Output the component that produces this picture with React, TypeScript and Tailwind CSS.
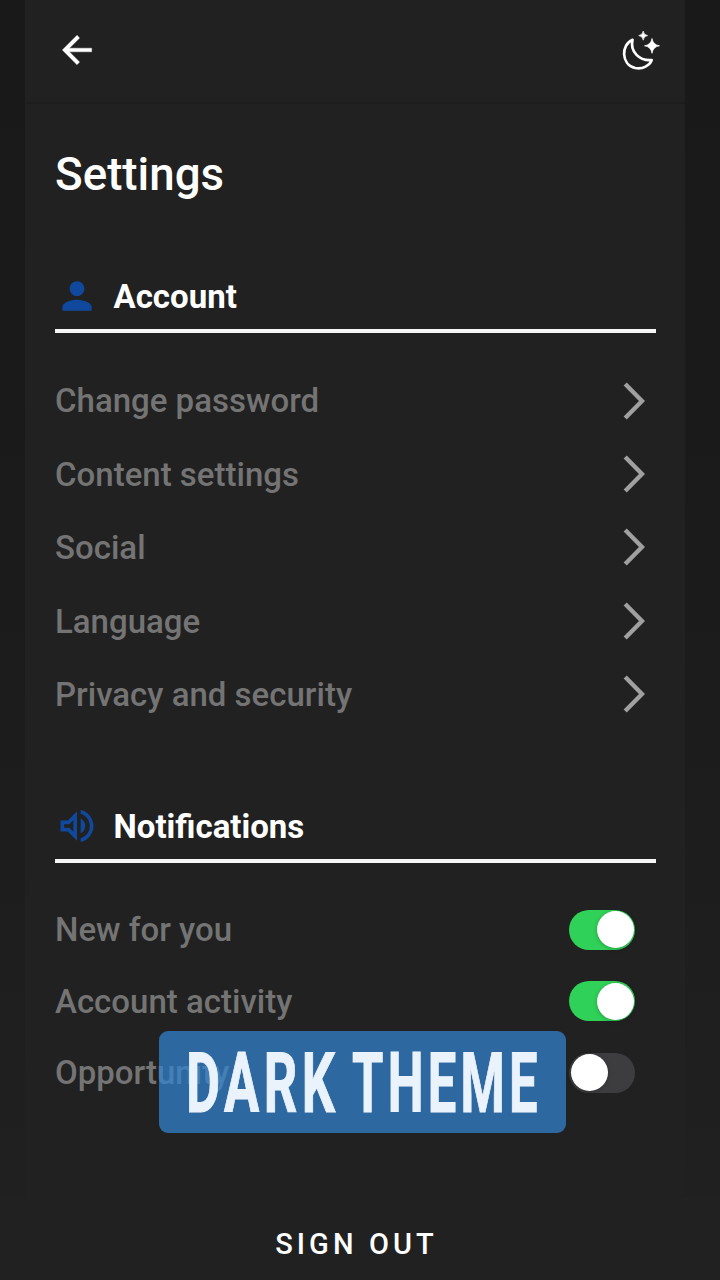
import { useState } from "react";
import type { ReactNode } from "react";

const accountItems = ["Change password", "Content settings", "Social", "Language", "Privacy and security"];

function BackIcon() {
  return (
    <svg viewBox="0 0 24 24" className="h-[44px] w-[44px]" fill="currentColor" stroke="currentColor" strokeWidth=".2">
      <path d="M20 11H7.83l5.59-5.59L12 4l-8 8 8 8 1.41-1.41L7.83 13H20v-2z" />
    </svg>
  );
}

function MoonIcon() {
  return (
    <svg viewBox="0 0 40 42" className="h-[42px] w-[40px]" fill="none">
      <path
        d="M12.5 9.8C0.8 14.8 1 34.6 15.2 38C22.8 39.5 29.7 35.5 31.7 30.1C19.5 31.2 9.8 21.8 12.5 9.8Z"
        stroke="currentColor"
        strokeWidth="2.7"
        strokeLinejoin="round"
      />
      <path d="M32 8.5Q33 14.8 39.5 15.8Q33 16.8 32 23.3Q31 16.8 24.5 15.8Q31 14.8 32 8.5Z" fill="currentColor" stroke="currentColor" strokeWidth=".7" />
      <path d="M23.2 1Q23.7 5 27.7 5.6Q23.7 6.2 23.2 10.2Q22.7 6.2 18.7 5.6Q22.7 5 23.2 1Z" fill="currentColor" stroke="currentColor" strokeWidth=".6" />
    </svg>
  );
}

function PersonIcon() {
  return (
    <svg viewBox="0 0 24 24" className="h-[44px] w-[44px]" fill="currentColor">
      <path d="M12 12c2.21 0 4-1.79 4-4s-1.79-4-4-4-4 1.79-4 4 1.79 4 4 4zm0 2c-2.67 0-8 1.34-8 4v2h16v-2c0-2.66-5.33-4-8-4z" />
    </svg>
  );
}

function SpeakerIcon() {
  return (
    <svg viewBox="0 0 24 24" className="h-[44px] w-[44px]" fill="currentColor">
      <path d="M3 9v6h4l5 5V4L7 9H3zm7-.17v6.34L7.83 13H5v-2h2.83L10 8.83zM16.5 12c0-1.77-1.02-3.29-2.5-4.03v8.05c1.48-.73 2.5-2.25 2.5-4.02zM14 3.23v2.06c2.89.86 5 3.54 5 6.71s-2.11 5.85-5 6.71v2.06c4.01-.91 7-4.49 7-8.77s-2.99-7.86-7-8.77z" />
    </svg>
  );
}

function Chevron() {
  return (
    <svg viewBox="0 0 22 38" className="mr-[11px] mb-px h-[38px] w-[22px]" fill="none">
      <path d="M2.2 2L19 19L2.2 36" stroke="#a0a0a0" strokeWidth="4.4" />
    </svg>
  );
}

function SectionHeader({ icon, title }: { icon: ReactNode; title: string }) {
  return (
    <div className="flex h-[59px] items-start border-b-4 border-[#f6f6f6]">
      <div className="-ml-[0.5px] flex w-[59px] justify-start text-[#10489d]">{icon}</div>
      <h2 className="text-[33px] leading-[45px] font-bold">{title}</h2>
    </div>
  );
}

function ToggleRow({ label, initial }: { label: string; initial: boolean }) {
  const [on, setOn] = useState(initial);
  return (
    <div className="flex h-[71.6px] items-center justify-between pr-[21px]">
      <span className="text-[33px] font-medium text-[#747474]">{label}</span>
      <button
        role="switch"
        aria-checked={on}
        aria-label={label}
        onClick={() => setOn(!on)}
        className={
          on
            ? "flex h-10 w-[66px] items-center justify-end rounded-full bg-[#30d158] pr-[1.5px]"
            : "flex h-10 w-[66px] items-center justify-start rounded-full bg-[#3d3d40] pl-[1.5px]"
        }
      >
        <span className="h-[37px] w-[37px] rounded-full bg-white shadow-[0_1px_4px_rgba(0,0,0,0.25)]" />
      </button>
    </div>
  );
}

export default function App() {
  return (
    <div className="relative flex h-[1280px] w-[720px] flex-col overflow-hidden bg-[#212121] font-['Roboto',sans-serif] text-white">
      <div className="flex h-[1197px] bg-linear-to-b from-[#191919] via-[#1b1b1b] to-[#202020] px-[25px]">
        <main className="flex w-[660px] flex-col rounded-b-sm bg-[#212121]">
          <header className="flex h-[104px] items-start justify-between border-b-2 border-[#1d1d1d] pt-[28px] pr-[25px] pl-[30px]">
            <button aria-label="Back">
              <BackIcon />
            </button>
            <button aria-label="Theme" className="pt-[1.5px]">
              <MoonIcon />
            </button>
          </header>
          <div className="flex flex-col pr-[29px] pl-[30px]">
            <h1 className="mt-[44px] h-[53px] text-[45.7px] leading-[54px] font-medium">Settings</h1>
            <section className="mt-[73px]">
              <SectionHeader icon={<PersonIcon />} title="Account" />
              <div className="mt-[31.4px]">
                {accountItems.map((item) => (
                  <div key={item} className="flex h-[73.4px] items-center justify-between">
                    <span className="text-[33px] font-medium text-[#747474]">{item}</span>
                    <Chevron />
                  </div>
                ))}
              </div>
            </section>
            <section className="mt-[72.6px]">
              <SectionHeader icon={<SpeakerIcon />} title="Notifications" />
              <div className="mt-[31px]">
                <ToggleRow label="New for you" initial={true} />
                <ToggleRow label="Account activity" initial={true} />
                <ToggleRow label="Opportunity" initial={false} />
              </div>
            </section>
          </div>
        </main>
      </div>
      <footer className="flex h-[83px] items-start justify-center pt-[29px] pr-[7px]">
        <button className="text-[29px] leading-[36px] font-medium tracking-[4.1px]">SIGN OUT</button>
      </footer>
      <div className="absolute top-[1031px] left-[159px] h-[102px] w-[407px] rounded-[9px] bg-[#3284d1]/72 text-[83px] leading-[102px] font-bold tracking-[7px] whitespace-nowrap text-[#eaf3fc] [-webkit-text-stroke:1px_#eaf3fc]">
        <span className="absolute top-[2px] left-[27px] origin-left scale-x-[0.632]">DARK</span>
        <span className="absolute top-[2px] left-[193px] origin-left scale-x-[0.61]">THEME</span>
      </div>
    </div>
  );
}
